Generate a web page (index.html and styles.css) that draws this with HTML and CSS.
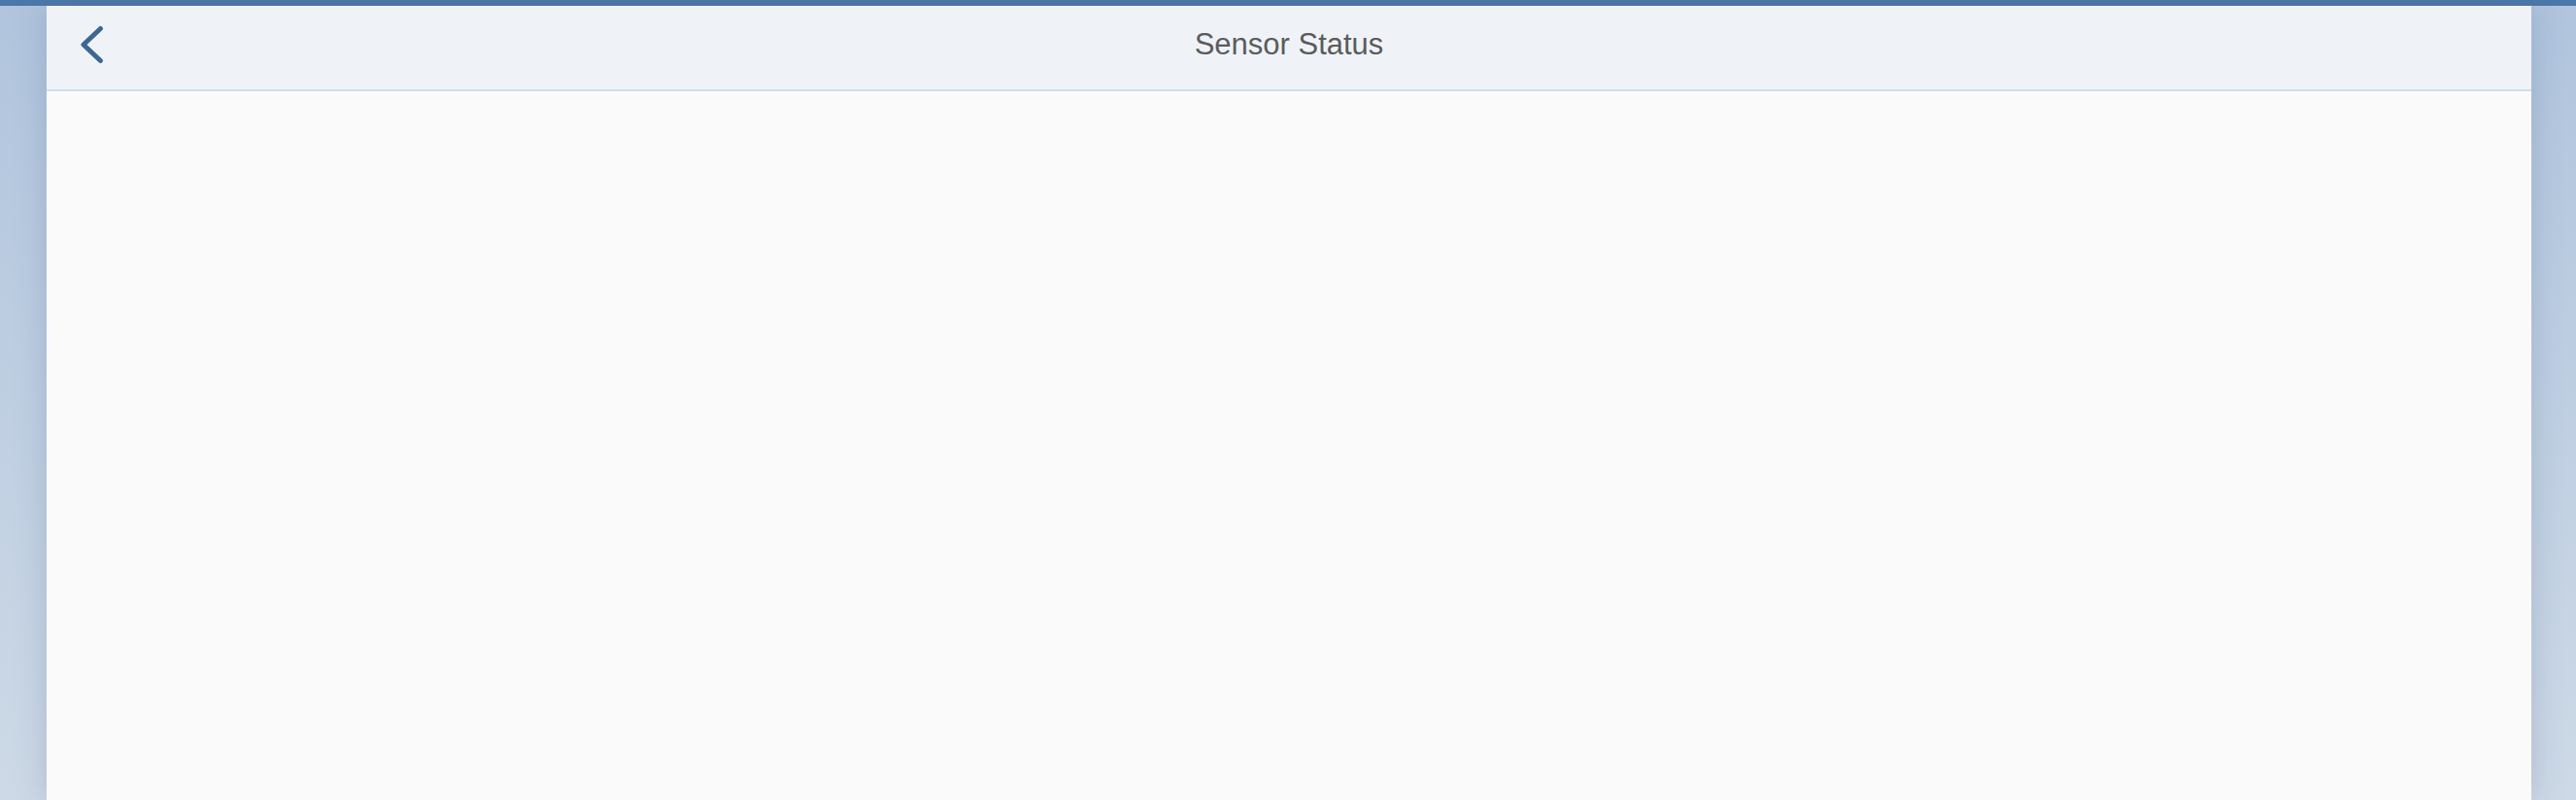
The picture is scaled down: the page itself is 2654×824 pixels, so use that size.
FILE: index.html
```html
<!DOCTYPE html>
<html lang="en">
<head>
<meta charset="utf-8">
<title>Sensor Status</title>
<link rel="stylesheet" href="styles.css">
</head>
<body>
<div class="shell-bar"></div>
<div class="stage">
  <div class="page">
    <header class="page-header">
      <button class="back-btn" aria-label="Back">
        <svg width="30" height="44" viewBox="0 0 30 44">
          <path d="M20.5 6.5 L3 23 L20.5 39.5" fill="none" stroke="#3d6694" stroke-width="5" stroke-linecap="round" stroke-linejoin="round"/>
        </svg>
      </button>
      <h1 class="page-title">Sensor Status</h1>
    </header>
    <main class="page-content"></main>
  </div>
</div>
</body>
</html>
```
FILE: styles.css
```css
html, body {
  margin: 0;
  padding: 0;
  height: 100%;
}
body {
  background: linear-gradient(to bottom, #b0c4dd 0%, #bfcfe2 50%, #cdd9e6 100%);
  font-family: "Liberation Sans", Arial, sans-serif;
  overflow: hidden;
}
.shell-bar {
  height: 6px;
  background: #4c78a9;
}
.stage {
  display: flex;
  height: calc(100% - 6px);
  padding-left: 48px;
}
.page {
  width: 2560px;
  display: flex;
  flex-direction: column;
  background: #fafafa;
  box-shadow: 0 0 30px rgba(70, 100, 140, 0.25);
}
.page-header {
  position: relative;
  height: 86px;
  border-bottom: 2px solid #d3deed;
  background: #eff3f8;
  display: flex;
  align-items: center;
  justify-content: center;
}
.back-btn {
  position: absolute;
  left: 30px;
  top: 14px;
  width: 40px;
  height: 50px;
  padding: 0;
  border: 0;
  background: transparent;
  display: flex;
  align-items: center;
  justify-content: center;
}
.page-title {
  margin: 0 0 6px 0;
  font-size: 31px;
  font-weight: normal;
  color: #5b5b5b;
  line-height: 40px;
}
.page-content {
  flex: 1;
}
```
